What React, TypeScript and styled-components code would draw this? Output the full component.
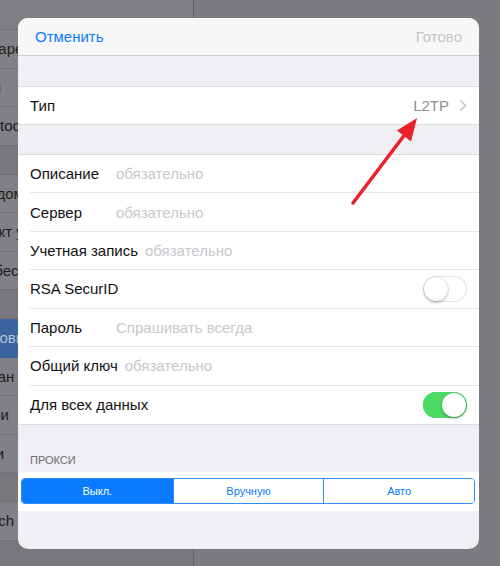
import React from "react";
import styled, { createGlobalStyle } from "styled-components";

const GlobalStyle = createGlobalStyle`
  html, body { margin: 0; padding: 0; background: #7b7c80; }
  body { font-family: "Liberation Sans", Arial, sans-serif; -webkit-font-smoothing: antialiased; }
  * { box-sizing: border-box; }
`;

const Screen = styled.div`
  position: relative;
  width: 500px;
  height: 566px;
  overflow: hidden;
  display: grid;
  grid-template-columns: 193px 1px 1fr;
  background: #7b7c80;
`;

const Master = styled.div`
  display: flex;
  flex-direction: column;
  overflow: hidden;
  background: #78787c;
`;

const MasterNav = styled.div`
  height: 30px;
  flex: none;
  background: #7e7f83;
  border-bottom: 1px solid #707074;
`;

const MasterGap = styled.div`
  height: 29px;
  flex: none;
  background: #78787c;
  border-bottom: 1px solid #707074;
`;

const MasterRow = styled.div<{ $selected?: boolean }>`
  height: 38.5px;
  flex: none;
  display: flex;
  align-items: center;
  background: ${(p) => (p.$selected ? "#3b63a0" : "#818185")};
  border-bottom: 1px solid ${(p) => (p.$selected ? "#3b63a0" : "#727276")};
`;

const MasterLabel = styled.span<{ $selected?: boolean; $shift: number }>`
  margin-left: ${(p) => -p.$shift}px;
  white-space: nowrap;
  font-size: 15px;
  color: ${(p) => (p.$selected ? "#b3c2da" : "#1e1e20")};
`;

const Divider = styled.div`
  background: #646569;
`;

const Detail = styled.div`
  background: #7b7c80;
`;

const Sheet = styled.div`
  position: absolute;
  top: 18px;
  left: 18px;
  width: 461px;
  height: 531px;
  border-radius: 10px;
  overflow: hidden;
  background: #efeff4;
  display: flex;
  flex-direction: column;
`;

const Header = styled.div`
  height: 38px;
  flex: none;
  display: flex;
  align-items: center;
  justify-content: space-between;
  padding: 0 17px;
  background: #f7f7f8;
  border-bottom: 1px solid #cfcfd3;
`;

const HeaderButton = styled.span<{ $disabled?: boolean }>`
  font-size: 15px;
  color: ${(p) => (p.$disabled ? "#c4c4c9" : "#0a7aff")};
`;

const Spacer = styled.div<{ $h: number }>`
  height: ${(p) => p.$h}px;
  flex: none;
`;

const Group = styled.div`
  flex: none;
  background: #ffffff;
  border-top: 1px solid #dcdce0;
  border-bottom: 1px solid #dcdce0;
`;

const Row = styled.div<{ $h: string }>`
  height: ${(p) => p.$h};
  display: flex;
  padding-left: 12px;
`;

const RowBody = styled.div<{ $last?: boolean }>`
  flex: 1;
  display: flex;
  align-items: center;
  gap: 7px;
  padding-right: 12px;
  border-bottom: ${(p) => (p.$last ? "none" : "1px solid #e6e6ea")};
`;

const Label = styled.span`
  min-width: 79px;
  font-size: 15px;
  color: #111111;
  white-space: nowrap;
`;

const Placeholder = styled.span`
  font-size: 15px;
  color: #c7c7cd;
  white-space: nowrap;
`;

const Value = styled.span`
  margin-left: auto;
  font-size: 15px;
  color: #8e8e93;
  display: flex;
  align-items: center;
  gap: 10px;
`;

const Track = styled.div<{ $on?: boolean }>`
  margin-left: auto;
  width: 44px;
  height: 26px;
  border-radius: 13px;
  padding: 1px;
  display: flex;
  justify-content: ${(p) => (p.$on ? "flex-end" : "flex-start")};
  background: ${(p) => (p.$on ? "#4cd964" : "#ffffff")};
  box-shadow: inset 0 0 0 1px ${(p) => (p.$on ? "#4cd964" : "#e3e3e8")};
`;

const Knob = styled.div`
  width: 24px;
  height: 24px;
  border-radius: 50%;
  background: #ffffff;
  box-shadow: 0 2px 3px rgba(0, 0, 0, 0.22), 0 0 0 0.5px rgba(0, 0, 0, 0.12);
`;

const SectionHeader = styled.div`
  height: 47px;
  flex: none;
  display: flex;
  align-items: flex-end;
  padding: 0 12px 6px;
  font-size: 11px;
  color: #6d6d72;
  text-transform: uppercase;
`;

const SegmentBand = styled.div`
  height: 39px;
  flex: none;
  background: #ffffff;
  padding: 6px 4px 0 3px;
`;

const Segmented = styled.div`
  height: 26px;
  display: grid;
  grid-template-columns: 1fr 1fr 1fr;
  border: 1px solid #2f8cff;
  border-radius: 4px;
  overflow: hidden;
`;

const Segment = styled.div<{ $active?: boolean }>`
  display: flex;
  align-items: center;
  justify-content: center;
  font-size: 11px;
  color: ${(p) => (p.$active ? "#ffffff" : "#0a7aff")};
  background: ${(p) => (p.$active ? "#0a7aff" : "#ffffff")};
  & + & {
    border-left: 1px solid #2f8cff;
  }
`;

const ArrowLayer = styled.svg`
  position: absolute;
  inset: 0;
  pointer-events: none;
`;

const masterSections: { label: string; shift: number; selected?: boolean }[][] = [
  [
    { label: "Авиарежим", shift: 28 },
    { label: "Wi-Fi", shift: 34 },
    { label: "Bluetooth", shift: 30 },
  ],
  [
    { label: "Уведомления", shift: 28 },
    { label: "Пункт управления", shift: 28 },
    { label: "Не беспокоить", shift: 29 },
  ],
  [
    { label: "Основные", selected: true, shift: 28 },
    { label: "Экран и яркость", shift: 28 },
    { label: "Обои", shift: 28 },
    { label: "Звуки", shift: 35 },
  ],
  [{ label: "Touch ID и код-пароль", shift: 26 }],
];

type Field = { label: string; placeholder?: string; toggle?: "on" | "off" };

const fields: Field[] = [
  { label: "Описание", placeholder: "обязательно" },
  { label: "Сервер", placeholder: "обязательно" },
  { label: "Учетная запись", placeholder: "обязательно" },
  { label: "RSA SecurID", toggle: "off" },
  { label: "Пароль", placeholder: "Спрашивать всегда" },
  { label: "Общий ключ", placeholder: "обязательно" },
  { label: "Для всех данных", toggle: "on" },
];

const Chevron = () => (
  <svg width="8" height="13" viewBox="0 0 8 13" fill="none">
    <path d="M1.5 1.5 L6.5 6.5 L1.5 11.5" stroke="#c7c7cc" strokeWidth="1.6" strokeLinecap="round" strokeLinejoin="round" />
  </svg>
);

export default function App() {
  return (
    <>
      <GlobalStyle />
      <Screen>
        <Master>
          <MasterNav />
          {masterSections.map((section, si) => (
            <React.Fragment key={si}>
              {si > 0 && <MasterGap />}
              {section.map((item) => (
                <MasterRow key={item.label} $selected={item.selected}>
                  <MasterLabel $selected={item.selected} $shift={item.shift}>
                    {item.label}
                  </MasterLabel>
                </MasterRow>
              ))}
            </React.Fragment>
          ))}
          <MasterGap />
        </Master>
        <Divider />
        <Detail />

        <Sheet>
          <Header>
            <HeaderButton>Отменить</HeaderButton>
            <HeaderButton $disabled>Готово</HeaderButton>
          </Header>
          <Spacer $h={30} />
          <Group>
            <Row $h="37px">
              <RowBody $last>
                <Label>Тип</Label>
                <Value>
                  L2TP
                  <Chevron />
                </Value>
              </RowBody>
            </Row>
          </Group>
          <Spacer $h={29} />
          <Group>
            {fields.map((f, i) => (
              <Row key={f.label} $h="calc(269px / 7)">
                <RowBody $last={i === fields.length - 1}>
                  <Label>{f.label}</Label>
                  {f.placeholder && <Placeholder>{f.placeholder}</Placeholder>}
                  {f.toggle && (
                    <Track $on={f.toggle === "on"}>
                      <Knob />
                    </Track>
                  )}
                </RowBody>
              </Row>
            ))}
          </Group>
          <SectionHeader>Прокси</SectionHeader>
          <SegmentBand>
            <Segmented>
              <Segment $active>Выкл.</Segment>
              <Segment>Вручную</Segment>
              <Segment>Авто</Segment>
            </Segmented>
          </SegmentBand>
        </Sheet>

        <ArrowLayer width="500" height="566" viewBox="0 0 500 566">
          <line x1="353" y1="203" x2="406" y2="133" stroke="#e8212b" strokeWidth="3.5" strokeLinecap="round" />
          <polygon points="417,118 397,130.5 411,141.5" fill="#e8212b" />
        </ArrowLayer>
      </Screen>
    </>
  );
}
